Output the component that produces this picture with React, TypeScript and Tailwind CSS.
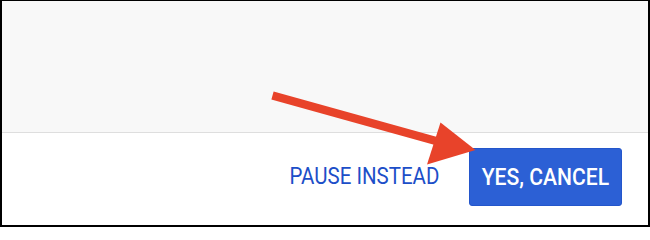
import React from "react";

export default function App() {
  return (
    <div
      className="relative w-[650px] h-[227px] overflow-hidden bg-white"
      style={{ fontFamily: "Roboto, 'Liberation Sans', Arial, sans-serif" }}
    >
      <div className="w-[650px] h-[227px] border-black border-t border-l-2 border-r-2 border-b-2 flex flex-col bg-white">
        <div className="h-[132px] shrink-0 bg-[#f8f8f8] border-b border-[#dedede]" />
        <div className="flex flex-1 justify-end items-start pr-[26px] pt-[15px]">
          <button className="mt-[17px] mr-[30px] text-[#1c4ec8] text-[23px] leading-[24px] font-normal whitespace-nowrap">
            <span className="inline-block origin-right scale-x-[0.89]">PAUSE INSTEAD</span>
          </button>
          <button className="w-[153px] h-[58px] rounded-[3px] bg-[#2c60d5] border border-[#2456cb] text-white text-[24px] leading-[24px] font-medium whitespace-nowrap flex items-center justify-center">
            <span className="inline-block origin-center scale-x-[0.88]">YES, CANCEL</span>
          </button>
        </div>
      </div>
      <svg
        className="absolute top-0 left-0 pointer-events-none"
        width="650"
        height="227"
        viewBox="0 0 650 227"
      >
        <line
          x1="272.5"
          y1="95.5"
          x2="436"
          y2="141"
          stroke="#e8432a"
          strokeWidth="8.5"
          strokeLinecap="butt"
        />
        <polygon points="440.5,122.5 427,164.5 475.5,150" fill="#e8432a" />
      </svg>
    </div>
  );
}
